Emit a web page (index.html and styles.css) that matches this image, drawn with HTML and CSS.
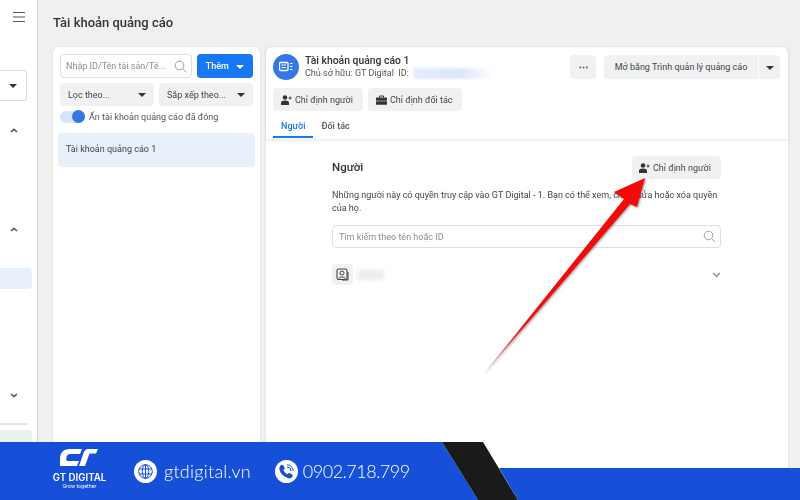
FILE: index.html
```html
<!DOCTYPE html>
<html lang="vi">
<head>
    <meta charset="UTF-8">
    <meta name="viewport" content="width=device-width, initial-scale=1.0">
    <title>Tài khoản quảng cáo</title>
    <link rel="stylesheet" href="styles.css">
</head>
<body>
    <div class="app">
        <aside class="sidebar">
            <svg class="menu-icon" width="12" height="12" viewBox="0 0 12 12"><path d="M0 1.500h12M0 6h12M0 10.500h12" stroke="#555" stroke-width="1.200"/></svg>
            <div class="side-select"><span class="caret"></span></div>
            <svg class="chev chev-1" width="8" height="5" viewBox="0 0 8 5"><path d="M1 4l3-2.600L7 4" fill="none" stroke="#555" stroke-width="1.600"/></svg>
            <svg class="chev chev-2" width="8" height="5" viewBox="0 0 8 5"><path d="M1 4l3-2.600L7 4" fill="none" stroke="#555" stroke-width="1.600"/></svg>
            <div class="side-active"></div>
            <svg class="chev chev-3" width="8" height="5" viewBox="0 0 8 5"><path d="M1 1l3 2.600L7 1" fill="none" stroke="#555" stroke-width="1.600"/></svg>
            <div class="side-line"></div>
            <div class="side-green"></div>
        </aside>

        <main class="content">
            <h1>Tài khoản quảng cáo</h1>
            <div class="columns">
                <section class="panel list-panel">
                    <div class="list-row">
                        <div class="search small-search">
                            <span class="placeholder">Nhập ID/Tên tài sản/Tê...</span>
                            <svg width="13" height="13" viewBox="0 0 13 13"><circle cx="5.500" cy="5.500" r="4.300" fill="none" stroke="#9a9da2"/><path d="M8.700 8.700l3.500 3.500" stroke="#9a9da2"/></svg>
                        </div>
                        <button class="btn-primary">Thêm <span class="caret white"></span></button>
                    </div>
                    <div class="list-row filters">
                        <button class="btn btn-select">Lọc theo... <span class="caret"></span></button>
                        <button class="btn btn-select">Sắp xếp theo... <span class="caret"></span></button>
                    </div>
                    <div class="toggle-row">
                        <span class="toggle"><span class="knob"></span></span>
                        Ẩn tài khoản quảng cáo đã đóng
                    </div>
                    <div class="account-item">Tài khoản quảng cáo 1</div>
                </section>

                <section class="panel detail-panel">
                    <div class="detail-top">
                        <div class="detail-head">
                            <span class="avatar">
                                <svg width="14" height="12" viewBox="0 0 14 12"><rect x="0.500" y="1.500" width="8.500" height="8" rx="1" fill="none" stroke="#fff" stroke-width="1.300"/><path d="M2.500 4h4.500M2.500 6.500h4.500M11 2.500h2.500M11 5.500h2.500M11 8.500h2.500" stroke="#fff" stroke-width="1.200"/></svg>
                            </span>
                            <div class="head-text">
                                <div class="head-title">Tài khoản quảng cáo 1</div>
                                <div class="head-sub">Chủ sở hữu: GT Digital  ID: <span class="hidden-id"></span></div>
                            </div>
                            <button class="btn btn-more">
                                <svg width="9" height="3" viewBox="0 0 9 3"><circle cx="1.200" cy="1.500" r="1" fill="#666"/><circle cx="4.500" cy="1.500" r="1" fill="#666"/><circle cx="7.800" cy="1.500" r="1" fill="#666"/></svg>
                            </button>
                            <div class="split">
                                <button class="btn btn-open">Mở bằng Trình quản lý quảng cáo</button>
                                <button class="btn btn-drop"><span class="caret"></span></button>
                            </div>
                        </div>
                        <div class="assign-row">
                            <button class="btn btn-assign assign-person">
                                <svg width="11" height="10" viewBox="0 0 11 10"><circle cx="4" cy="2.500" r="2.300" fill="#333"/><path d="M0 10V7.800C0 6.200 1.500 5.500 4 5.500s4 .7 4 2.300V10z" fill="#333"/><path d="M9 1.500v3M7.700 3h2.800" stroke="#333"/></svg>
                                Chỉ định người
                            </button>
                            <button class="btn btn-assign assign-partner">
                                <svg width="11" height="10" viewBox="0 0 11 10"><path d="M3.500 2.500V1h4v1.500" fill="none" stroke="#333"/><rect y="2.500" width="11" height="3.200" rx=".6" fill="#333"/><rect y="6.300" width="11" height="3.500" rx=".6" fill="#333"/></svg>
                                Chỉ định đối tác
                            </button>
                        </div>
                        <div class="tabs">
                            <span class="tab active">Người</span>
                            <span class="tab">Đối tác</span>
                        </div>
                    </div>

                    <div class="people">
                        <div class="people-head">
                            <h2>Người</h2>
                            <button class="btn btn-assign">
                                <svg width="11" height="10" viewBox="0 0 11 10"><circle cx="4" cy="2.500" r="2.300" fill="#333"/><path d="M0 10V7.800C0 6.200 1.500 5.500 4 5.500s4 .7 4 2.300V10z" fill="#333"/><path d="M9 1.500v3M7.700 3h2.800" stroke="#333"/></svg>
                                Chỉ định người
                            </button>
                        </div>
                        <p>Những người này có quyền truy cập vào GT Digital - 1. Bạn có thể xem, chỉnh sửa hoặc xóa quyền của họ.</p>
                        <div class="search people-search">
                            <span class="placeholder">Tìm kiếm theo tên hoặc ID</span>
                            <svg width="13" height="13" viewBox="0 0 13 13"><circle cx="5.500" cy="5.500" r="4.300" fill="none" stroke="#9a9da2"/><path d="M8.700 8.700l3.500 3.500" stroke="#9a9da2"/></svg>
                        </div>
                        <div class="person">
                            <span class="person-icon">
                                <svg width="13" height="13" viewBox="0 0 13 13"><rect x="1" y="1" width="10" height="10.500" rx="1.500" fill="none" stroke="#444" stroke-width="1.100"/><circle cx="6" cy="5" r="2" fill="none" stroke="#444"/><path d="M2.800 10.500c.5-2 6-2 6.500 0M12 4v8H6" fill="none" stroke="#444"/></svg>
                            </span>
                            <span class="person-name"></span>
                            <svg class="person-chev" width="9" height="6" viewBox="0 0 9 6"><path d="M1 1l3.500 3.500L8 1" fill="none" stroke="#8a8d91" stroke-width="1.400"/></svg>
                        </div>
                    </div>
                </section>
            </div>
        </main>
    </div>

    <svg class="arrow" width="800" height="500" viewBox="0 0 800 500">
        <defs>
            <linearGradient id="tail" x1="483" y1="375" x2="525" y2="322" gradientUnits="userSpaceOnUse">
                <stop offset="0" stop-color="#d09a9a"/>
                <stop offset="1" stop-color="#f50a0a"/>
            </linearGradient>
        </defs>
        <polygon points="483,375 624,199 614,192 645,178 637,207 630,204" fill="url(#tail)"/>
    </svg>

    <footer class="brand-bar">
        <svg class="bar-shape" width="800" height="58" viewBox="0 0 800 58">
            <polygon points="0,0 442,0 478,58 0,58" fill="#1650d8"/>
            <polygon points="442,0 483,0 518,58 478,58" fill="#1a1a1a"/>
            <polygon points="499,26 800,26 800,58 518,58" fill="#1650d8"/>
        </svg>
        <div class="logo">
            <svg width="40" height="20" viewBox="0 0 40 20"><path d="M22 0H10C3 0 0 4 0 10v7h17l2-5H8C6 12 6 10 6.500 8 7 6 8.500 5 10 5h10z" fill="#fff"/><path d="M28 0h10l-2 4.500h-6.500L25 17h-6l4.500-13C24.500 1.500 26 0 28 0z" fill="#fff"/></svg>
            <strong>GT DIGITAL</strong>
            <small>Grow together</small>
        </div>
        <div class="contact web">
            <span class="contact-icon">
                <svg width="15" height="15" viewBox="0 0 15 15" fill="none" stroke="#1650d8" stroke-width="1"><circle cx="7.500" cy="7.500" r="6.800"/><ellipse cx="7.500" cy="7.500" rx="3.200" ry="6.800"/><path d="M1 5h13M1 10h13M7.500 .7v13.600"/></svg>
            </span>
            gtdigital.vn
        </div>
        <div class="contact phone">
            <span class="contact-icon">
                <svg width="17" height="17" viewBox="0 0 17 17"><path d="M2.500 2.500c1-1 2.200-1 2.800 0l1.200 2c.4.700.2 1.300-.3 1.800l-.8.800c.8 1.800 2.200 3.300 4 4.200l.9-.8c.6-.5 1.200-.6 1.800-.2l2 1.300c.9.600.9 1.700 0 2.700-1 1.100-2.500 1.400-4.200.8C5.500 13.800 2.700 10.800 1.600 7c-.5-1.800-.1-3.400.9-4.500z" fill="#1650d8"/><path d="M9 4a4 4 0 0 1 4 4M9 1.800A6.200 6.200 0 0 1 15.200 8" fill="none" stroke="#1650d8" stroke-width="1"/></svg>
            </span>
            0902.718.799
        </div>
    </footer>
</body>
</html>
```

FILE: styles.css
```css
* {
    box-sizing: border-box;
}
body {
    margin: 0;
    width: 800px;
    height: 500px;
    overflow: hidden;
    position: relative;
    font-family: Roboto, 'Liberation Sans', sans-serif;
    color: #333;
    background-color: #f0f0f0;
}
button {
    font-family: inherit;
    border: none;
    cursor: pointer;
}
.app {
    display: flex;
    height: 500px;
    filter: blur(0.35px);
}
.caret {
    display: inline-block;
    width: 0;
    height: 0;
    border-left: 4px solid transparent;
    border-right: 4px solid transparent;
    border-top: 4px solid #333;
}
.caret.white {
    border-top-color: #fff;
    margin-left: 5px;
}

/* sidebar */
.sidebar {
    width: 38px;
    flex-shrink: 0;
    background-color: #fff;
    border-right: 1px solid #d8d8d8;
    display: flex;
    flex-direction: column;
    overflow: hidden;
}
.menu-icon {
    margin: 11px 0 0 13px;
}
.side-select {
    width: 27px;
    height: 31px;
    margin: 47px 0 0 0;
    border: 1px solid #d8dadd;
    border-left: none;
    border-radius: 0 3px 3px 0;
    display: flex;
    align-items: center;
    padding-left: 9px;
}
.chev {
    margin-left: 10px;
    flex-shrink: 0;
}
.chev-1 {
    margin-top: 27px;
}
.chev-2 {
    margin-top: 94px;
}
.side-active {
    width: 32px;
    height: 21px;
    margin-top: 36px;
    background-color: #e7f0fb;
    border-radius: 0 4px 4px 0;
}
.chev-3 {
    margin-top: 104px;
}
.side-line {
    width: 27px;
    height: 2px;
    margin-top: 25px;
    background-color: #e4e4e4;
}
.side-green {
    width: 32px;
    height: 20px;
    margin-top: 5px;
    background-color: #e6f3ee;
    border-radius: 0 4px 0 0;
}

/* main area */
.content {
    flex: 1;
    padding: 0 12px 0 15px;
    min-width: 0;
}
h1 {
    margin: 0;
    height: 47px;
    line-height: 46px;
    font-size: 13px;
    font-weight: 500;
    color: #333;
}
.columns {
    display: flex;
    gap: 6px;
    height: 453px;
}
.panel {
    background-color: #fff;
    border-radius: 6px 6px 0 0;
    box-shadow: 0 0 2px rgba(0, 0, 0, 0.12);
}
.btn {
    background-color: #f0f1f2;
    border-radius: 4px;
    color: #444;
    font-size: 9px;
    height: 23px;
}

/* left list */
.list-panel {
    width: 207px;
    flex-shrink: 0;
    padding: 7px 5px;
}
.list-row {
    display: flex;
    gap: 5px;
    padding: 0 2px;
}
.search {
    display: flex;
    align-items: center;
    justify-content: space-between;
    border: 1px solid #dddfe2;
    border-radius: 4px;
    background-color: #fff;
}
.placeholder {
    color: #8a8d91;
    font-size: 9px;
}
.small-search {
    width: 132px;
    height: 24px;
    padding: 0 4px 0 5px;
}
.btn-primary {
    width: 56px;
    height: 24px;
    background-color: #1877f2;
    color: #fff;
    font-size: 9px;
    font-weight: 500;
    border-radius: 4px;
}
.filters {
    margin-top: 5px;
}
.btn-select {
    width: 94px;
    display: flex;
    align-items: center;
    justify-content: space-between;
    padding: 0 8px;
}
.toggle-row {
    display: flex;
    align-items: center;
    gap: 4px;
    margin-top: 4px;
    padding: 0 2px;
    height: 14px;
    font-size: 9px;
    color: #555;
}
.toggle {
    width: 25px;
    height: 12px;
    border-radius: 6px;
    background-color: #d6e4fa;
    position: relative;
    flex-shrink: 0;
}
.knob {
    position: absolute;
    right: 0;
    top: -1px;
    width: 13px;
    height: 13px;
    border-radius: 50%;
    background-color: #3578e5;
}
.account-item {
    height: 34px;
    margin-top: 9px;
    padding: 0 8px;
    line-height: 33px;
    font-size: 9px;
    color: #444;
    background-color: #e7f0fb;
    border-radius: 4px;
}

/* right detail */
.detail-panel {
    flex: 1;
    min-width: 0;
}
.detail-top {
    height: 92px;
    padding: 7px 8px 0 7px;
    box-shadow: 0 1px 3px rgba(0, 0, 0, 0.12);
}
.detail-head {
    display: flex;
    align-items: flex-start;
}
.avatar {
    width: 26px;
    height: 26px;
    border-radius: 50%;
    background-color: #3578e5;
    display: flex;
    align-items: center;
    justify-content: center;
}
.head-text {
    flex: 1;
    margin-left: 6px;
}
.head-title {
    font-size: 10.400px;
    font-weight: 500;
    line-height: 13px;
}
.head-sub {
    font-size: 9px;
    line-height: 13px;
    color: #555;
    display: flex;
    align-items: center;
    white-space: pre;
}
.hidden-id {
    width: 80px;
    height: 11px;
    margin-left: 2px;
    background: linear-gradient(90deg, #e6edfa, #dbe6f8 60%, #fff);
    filter: blur(1.500px);
}
.btn-more {
    width: 26px;
    height: 24px;
    margin-top: 1px;
    display: flex;
    align-items: center;
    justify-content: center;
}
.split {
    display: flex;
    gap: 1px;
    margin: 1px 0 0 8px;
}
.btn-open {
    width: 154px;
    height: 24px;
    border-radius: 4px 0 0 4px;
}
.btn-drop {
    width: 21px;
    height: 24px;
    border-radius: 0 4px 4px 0;
}
.assign-row {
    display: flex;
    gap: 5px;
    margin-top: 8px;
}
.btn-assign {
    display: flex;
    align-items: center;
    gap: 3px;
    padding: 0 8px;
    white-space: nowrap;
}
.btn-assign svg {
    flex-shrink: 0;
}
.assign-person {
    width: 90px;
}
.assign-partner {
    width: 94px;
}
.tabs {
    display: flex;
    margin-top: 4px;
}
.tab {
    height: 23px;
    padding: 0 8px;
    line-height: 23px;
    font-size: 9px;
    font-weight: 500;
    color: #555;
}
.tab.active {
    color: #1877f2;
    border-bottom: 2px solid #1877f2;
}

/* people section */
.people {
    width: 389px;
    margin-left: 66px;
    padding-top: 17px;
}
.people-head {
    display: flex;
    align-items: center;
    justify-content: space-between;
}
.people-head .btn-assign {
    width: 89px;
    padding-left: 7px;
}
h2 {
    margin: 0 0 2px;
    font-size: 11.500px;
    font-weight: 500;
}
.people p {
    margin: 10px 0 0;
    font-size: 9px;
    line-height: 13px;
    color: #444;
}
.people-search {
    height: 23px;
    margin-top: 10px;
    padding: 0 4px 0 6px;
}
.person {
    display: flex;
    align-items: center;
    margin-top: 16px;
}
.person-icon {
    width: 21px;
    height: 21px;
    border-radius: 4px;
    background-color: #f0f1f2;
    display: flex;
    align-items: center;
    justify-content: center;
}
.person-name {
    width: 27px;
    height: 10px;
    margin-left: 4px;
    background-color: #ececec;
    filter: blur(2px);
}
.person-chev {
    margin-left: auto;
}

/* red arrow and brand bar lie over the screenshot */
.arrow {
    position: absolute;
    left: 0;
    top: 0;
    filter: drop-shadow(1px 1px 1px rgba(0, 0, 0, 0.4));
}
.brand-bar {
    position: absolute;
    left: 0;
    bottom: 0;
    width: 800px;
    height: 58px;
    display: flex;
    align-items: center;
    padding-left: 52px;
    color: #fff;
}
.bar-shape {
    position: absolute;
    left: 0;
    top: 0;
}
.logo {
    position: relative;
    width: 55px;
    padding-bottom: 4px;
    display: flex;
    flex-direction: column;
    align-items: center;
}
.logo svg {
    margin-left: 1px;
}
.logo strong {
    font-family: Inter, sans-serif;
    font-size: 9.700px;
    font-weight: 600;
    line-height: 11px;
    margin-top: 3px;
    white-space: nowrap;
}
.logo small {
    font-family: Inter, sans-serif;
    font-size: 5px;
    line-height: 6px;
    white-space: nowrap;
}
.contact {
    position: relative;
    display: flex;
    align-items: center;
    font-family: Lato, sans-serif;
    font-size: 18px;
    font-weight: 300;
}
.web {
    gap: 7px;
    margin: 0 24px 0 27px;
    letter-spacing: 0.25px;
}
.phone {
    gap: 5px;
    letter-spacing: -0.5px;
}
.contact-icon {
    width: 23px;
    height: 23px;
    border-radius: 50%;
    background-color: #fff;
    display: flex;
    align-items: center;
    justify-content: center;
}
```
